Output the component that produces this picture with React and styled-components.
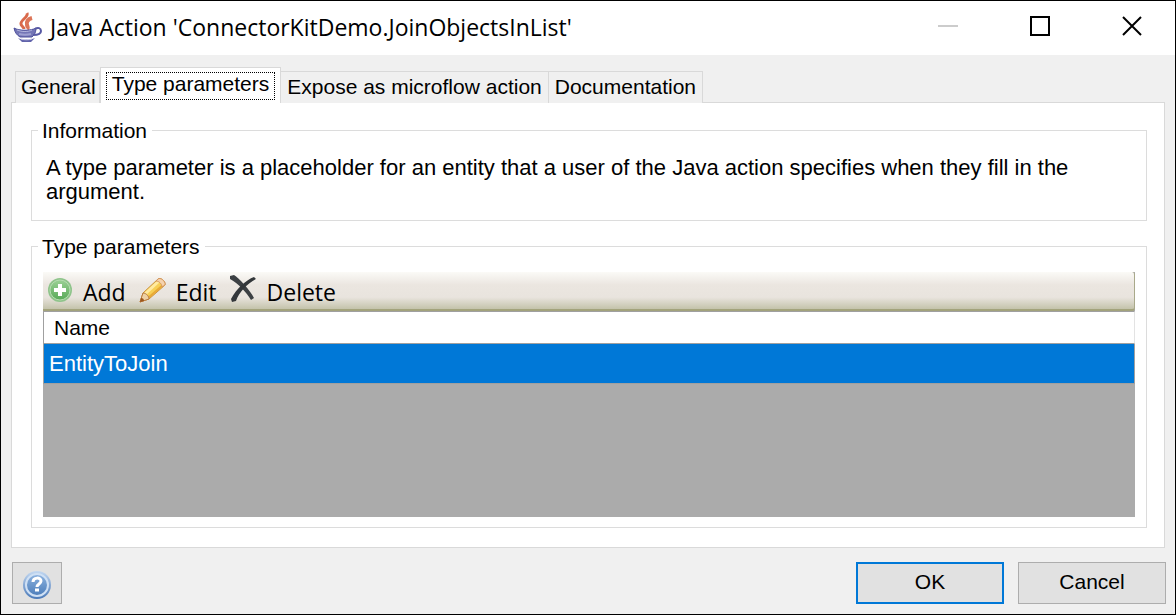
import React from "react";
import styled, { createGlobalStyle } from "styled-components";

const SANS = '"Liberation Sans", Arial, sans-serif';
const UI = '"Open Sans", "Segoe UI", sans-serif';

const GlobalStyle = createGlobalStyle`
  *, *::before, *::after { box-sizing: border-box; }
  body { margin: 0; background: #f0f0f0; color: #000; font: 21px/24px ${SANS}; }
  button { font: inherit; color: inherit; margin: 0; }
`;

const Window = styled.div`
  display: flex;
  flex-direction: column;
  min-height: 100vh;
  border: 1px solid #000;
`;

const TitleBar = styled.header`
  display: flex;
  align-items: center;
  height: 54px;
  padding-left: 12px;
  background: #fff;
`;

const Title = styled.h1`
  flex: 1;
  margin: 0 0 0 7px;
  padding-bottom: 2px;
  font: 400 23px/32px ${UI};
  white-space: nowrap;
`;

const WindowControls = styled.div`
  display: flex;
  gap: 6px;
  align-self: stretch;
  align-items: flex-start;
`;

const ControlButton = styled.button`
  display: grid;
  place-items: center;
  width: 86px;
  height: 50px;
  padding: 0;
  border: 0;
  background: transparent;
`;

const TabList = styled.div`
  display: flex;
  align-items: flex-end;
  height: 48px;
  padding: 0 14px;
  margin-bottom: -1px;
`;

const Tab = styled.button`
  position: relative;
  height: ${(p) => (p.$active ? 36 : 32)}px;
  padding: ${(p) => (p.$active ? "4px 5px 3px" : p.$joined ? "0 6px 2px" : "0 3px 2px 5px")};
  border: 1px solid #d9d9d9;
  border-bottom: 0;
  border-left-width: ${(p) => (p.$joined ? 0 : 1)}px;
  background: ${(p) => (p.$active ? "#fff" : "#f0f0f0")};
  white-space: nowrap;
`;

const TabFocus = styled.span`
  display: block;
  height: 28px;
  padding: 0 5px;
  border: 1px dotted #000;
  line-height: 22px;
`;

const Panel = styled.main`
  display: flex;
  flex: 1;
  flex-direction: column;
  gap: 13px;
  margin: 0 10px;
  padding: 15px 17px 19px 19px;
  border: 1px solid #d9d9d9;
  background: #fff;
`;

const Group = styled.fieldset`
  min-width: 0;
  margin: 0;
  padding: 0 6px;
  border: 1px solid #dcdcdc;
`;

const Legend = styled.legend`
  padding: 0 5px 0 4px;
  line-height: 25px;
`;

const Description = styled.p`
  margin: 0;
  padding: 13px 8px 16px;
  font-size: 22px;
`;

const GridPane = styled.div`
  min-height: 245px;
  margin: 13px 5px 10px;
  background: #ababab;
`;

const Toolbar = styled.div`
  display: flex;
  align-items: center;
  gap: 10px;
  height: 39px;
  padding-left: 5px;
  border-right: 1px solid #a9a98a;
  border-bottom: 2px solid #a3a37c;
  border-radius: 0 3px 3px 0;
  background: linear-gradient(#fbfaf7 0, #ebe6e0 35%, #e9e4de 68%, #c4c3ab 100%);
`;

const ToolButton = styled.button`
  display: flex;
  align-items: center;
  gap: 9px;
  height: 36px;
  padding: 2px 3px 0 0;
  border: 0;
  background: transparent;
  font: 23px/32px ${UI};

  svg { margin-bottom: 3px; }
`;

const ParameterTable = styled.table`
  width: 100%;
  border-collapse: separate;
  border-spacing: 0;
  text-align: left;
`;

const HeadCell = styled.th`
  height: 33px;
  padding: 0 10px;
  border: 1px solid #a0a0a0;
  border-right-color: #e3e3e3;
  background: #fff;
  font-weight: 400;
`;

const BodyCell = styled.td`
  height: 40px;
  padding: 0 5px;
  border: solid #a0a0a0;
  border-width: 0 1px 1px;
  background: #0078d7;
  color: #fff;
  font-size: 22px;
`;

const Footer = styled.footer`
  display: flex;
  gap: 14px;
  padding: 14px 9px 10px 11px;
`;

const PushButton = styled.button`
  display: grid;
  place-items: center;
  width: ${(p) => (p.$icon ? 50 : 148)}px;
  height: 42px;
  padding: ${(p) => (p.$icon ? "4px 0 0" : "0 0 2px")};
  margin-right: ${(p) => (p.$icon ? "auto" : 0)};
  border: ${(p) => (p.$primary ? "2px solid #0078d7" : "1px solid #adadad")};
  background: #e1e1e1;
`;

const JavaIcon = () => (
  <svg width="30" height="32" viewBox="0 0 30 32" fill="none" aria-hidden="true">
    <path d="M14 1C16 5 7 8 8 12c0 2 3 3 3 5" stroke="#d9694b" strokeWidth="3" />
    <path d="M19 6c-4 1-6 4-5 7s1 3 0 4" stroke="#dd7558" strokeWidth="4" />
    <path d="M1 16c5 3 17 3 22 0 0 5-2 7-4 9H7c-3-2-5-4-6-9z" fill="#7476b6" stroke="#4c4e9a" />
    <path d="M4 18c5 2 11 2 15 0" stroke="#b4b6de" strokeWidth="1" />
    <path d="M6 22c4 1 8 1 12 0" stroke="#9fa1d2" strokeWidth="2" />
    <path d="M22 17c3-2 6-1 6 2 0 3-3 4-8 4" stroke="#5759a4" strokeWidth="2" />
    <path d="M5 26c4 2 12 2 17 0l-4 4H9z" fill="#6264ab" />
    <path d="M8 27c3 1 8 1 11 0" stroke="#c9cbe8" strokeWidth="1" />
  </svg>
);

const AddIcon = () => (
  <svg width="26" height="26" viewBox="0 0 26 26" aria-hidden="true">
    <defs>
      <linearGradient id="addFill" x2="0" y2="1">
        <stop stopColor="#9bd095" />
        <stop offset="1" stopColor="#58aa58" />
      </linearGradient>
    </defs>
    <circle cx="12" cy="13" r="12" fill="#8fc48b" />
    <circle cx="12" cy="13" r="10" fill="url(#addFill)" stroke="#b5dcb0" />
    <path d="M12 7v12M6 13h12" stroke="#fff" strokeWidth="4" />
  </svg>
);

const EditIcon = () => (
  <svg width="28" height="26" viewBox="0 0 28 26" aria-hidden="true">
    <path d="M1 25l3-9L19 2c2-2 8 2 7 6L10 22z" fill="#f7cf55" stroke="#c98f3e" />
    <path d="M6 17L20 4" stroke="#ffeaa0" strokeWidth="3" />
    <path d="M9 21L24 8" stroke="#e8a936" strokeWidth="2" />
    <path d="M19 2c2-2 8 2 7 6l-3 2c0-3-3-6-6-6z" fill="#f5d2ad" stroke="#d5985f" />
    <path d="M1 25l3-9c3 0 6 3 6 6z" fill="#eed0a4" stroke="#b97d42" />
    <path d="M1 25l1-4c2 0 3 1 3 3z" fill="#9c571f" />
  </svg>
);

const DeleteIcon = () => (
  <svg width="28" height="30" viewBox="0 0 28 30" aria-hidden="true">
    <path d="M0 1l4-1c5 3 16 15 20 23l-3 2C16 17 9 9 0 4z" fill="#3c4043" />
    <path d="M24 2l2 2C17 9 9 17 6 26l-4 1-1-3C7 13 16 5 24 2z" fill="#33373a" />
  </svg>
);

const HelpIcon = () => (
  <svg width="30" height="30" viewBox="0 0 30 30" fill="none" aria-hidden="true">
    <defs>
      <linearGradient id="helpRim" x2="0" y2="1">
        <stop stopColor="#c3d8f1" />
        <stop offset="1" stopColor="#4a79b8" />
      </linearGradient>
      <linearGradient id="helpFill" x2="0" y2="1">
        <stop stopColor="#8db3df" />
        <stop offset="1" stopColor="#4c7dba" />
      </linearGradient>
    </defs>
    <circle cx="15" cy="15" r="14" fill="url(#helpRim)" />
    <circle cx="15" cy="15" r="11" fill="url(#helpFill)" stroke="#cfe0f4" strokeWidth="2" />
    <path d="M11 12c0-5 8-5 8-1 0 3-4 3-4 6" stroke="#fff" strokeWidth="3" />
    <path d="M13 20h4" stroke="#fff" strokeWidth="3" />
  </svg>
);

const TABS = ["General", "Type parameters", "Expose as microflow action", "Documentation"];
const ACTIVE = 1;
const TOOLS = [
  ["Add", AddIcon],
  ["Edit", EditIcon],
  ["Delete", DeleteIcon],
];

export default function App() {
  return (
    <Window>
      <GlobalStyle />
      <TitleBar>
        <JavaIcon />
        <Title>Java Action 'ConnectorKitDemo.JoinObjectsInList'</Title>
        <WindowControls>
          <ControlButton aria-label="Minimize" disabled>
            <svg width="20" height="20"><path d="M0 10h20" stroke="#ccc" strokeWidth="2" /></svg>
          </ControlButton>
          <ControlButton aria-label="Maximize">
            <svg width="20" height="20"><path d="M1 1h18v18H1z" fill="none" stroke="#000" strokeWidth="2" /></svg>
          </ControlButton>
          <ControlButton aria-label="Close">
            <svg width="20" height="20"><path d="M1 1l18 18M19 1L1 19" stroke="#000" strokeWidth="2" /></svg>
          </ControlButton>
        </WindowControls>
      </TitleBar>
      <TabList role="tablist">
        {TABS.map((name, i) => (
          <Tab
            key={name}
            role="tab"
            aria-selected={i === ACTIVE}
            $active={i === ACTIVE}
            $joined={i > ACTIVE}
          >
            {i === ACTIVE ? <TabFocus>{name}</TabFocus> : name}
          </Tab>
        ))}
      </TabList>
      <Panel role="tabpanel">
        <Group>
          <Legend>Information</Legend>
          <Description>
            A type parameter is a placeholder for an entity that a user of the Java action specifies
            when they fill in the argument.
          </Description>
        </Group>
        <Group>
          <Legend>Type parameters</Legend>
          <GridPane>
            <Toolbar role="toolbar">
              {TOOLS.map(([label, Icon]) => (
                <ToolButton key={label}>
                  <Icon />
                  {label}
                </ToolButton>
              ))}
            </Toolbar>
            <ParameterTable>
              <thead>
                <tr><HeadCell scope="col">Name</HeadCell></tr>
              </thead>
              <tbody>
                <tr><BodyCell>EntityToJoin</BodyCell></tr>
              </tbody>
            </ParameterTable>
          </GridPane>
        </Group>
      </Panel>
      <Footer>
        <PushButton $icon aria-label="Help"><HelpIcon /></PushButton>
        <PushButton $primary>OK</PushButton>
        <PushButton>Cancel</PushButton>
      </Footer>
    </Window>
  );
}
